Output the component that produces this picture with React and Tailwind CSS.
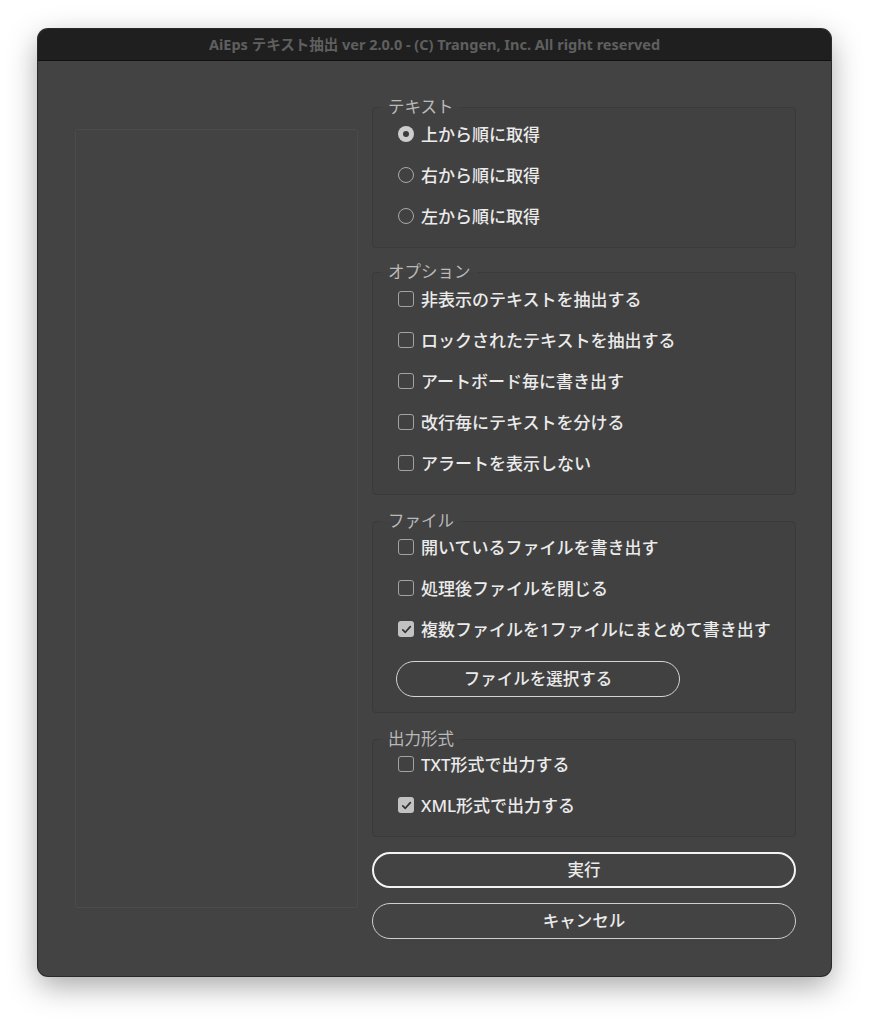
const font = { fontFamily: '"Noto Sans", "Noto Sans CJK JP", sans-serif' };

function Radio({ checked, label }) {
  return (
    <div className="flex h-[24px] items-center">
      {checked ? (
        <span className="flex h-[16px] w-[16px] items-center justify-center rounded-full bg-[#cdcdcd]">
          <span className="h-[6px] w-[6px] rounded-full bg-[#3c3c3c]" />
        </span>
      ) : (
        <span className="h-[16px] w-[16px] rounded-full border-[1.5px] border-[#a9a9a9]" />
      )}
      <span className="ml-[7px] text-[17px] font-medium leading-none text-[#ebebeb]">{label}</span>
    </div>
  );
}

function Check({ checked, label }) {
  return (
    <div className="flex h-[24px] items-center">
      {checked ? (
        <span className="flex h-[16px] w-[16px] items-center justify-center rounded-[3px] bg-[#c2c2c2]">
          <svg width="11" height="11" viewBox="0 0 11 11" fill="none">
            <path d="M1.8 5.8 L4.3 8.3 L9.3 2.6" stroke="#333" strokeWidth="1.7" strokeLinecap="round" strokeLinejoin="round" />
          </svg>
        </span>
      ) : (
        <span className="h-[16px] w-[16px] rounded-[3px] border-[1.5px] border-[#a3a3a3]" />
      )}
      <span className="ml-[7px] text-[17px] font-medium leading-none text-[#ebebeb]">{label}</span>
    </div>
  );
}

function Group({ title, pt, pb, children }) {
  return (
    <fieldset className="rounded-[4px] border border-[#3a3a3a] bg-[#414141]">
      <legend className="ml-[8px] px-[7px] text-[16.5px] leading-[18px] text-[#b9b9b9]">{title}</legend>
      <div className={`flex flex-col gap-[17px] pl-[25px] ${pt} ${pb}`}>{children}</div>
    </fieldset>
  );
}

export default function App() {
  return (
    <div className="h-[1024px] w-[870px] bg-white pl-[38px] pt-[29px]" style={font}>
      <div className="flex h-[947px] w-[793px] flex-col overflow-hidden rounded-[10px] bg-[#434343] shadow-[0_10px_30px_rgba(0,0,0,0.35)] ring-1 ring-[#2a2a2a]">
        <div className="flex h-[32px] shrink-0 items-center justify-center border-b border-[#111] bg-[#1f1f1f]">
          <span className="text-[14.5px] font-bold text-[#5f5f5f]">
            AiEps テキスト抽出 ver 2.0.0 - (C) Trangen, Inc. All right reserved
          </span>
        </div>
        <div className="flex flex-1 items-center pl-[37px] pr-[35px]">
          <div className="h-[779px] w-[283px] rounded-[2px] border border-[#4b4b4b]" />
          <div className="ml-[14px] flex w-[424px] flex-col">
            <Group title="テキスト" pt="pt-[6px]" pb="pb-[19px]">
              <Radio checked label="上から順に取得" />
              <Radio label="右から順に取得" />
              <Radio label="左から順に取得" />
            </Group>
            <div className="mt-[15px]">
              <Group title="オプション" pt="pt-[6px]" pb="pb-[19px]">
                <Check label="非表示のテキストを抽出する" />
                <Check label="ロックされたテキストを抽出する" />
                <Check label="アートボード毎に書き出す" />
                <Check label="改行毎にテキストを分ける" />
                <Check label="アラートを表示しない" />
              </Group>
            </div>
            <div className="mt-[17px]">
              <Group title="ファイル" pt="pt-[5px]" pb="pb-[15px]">
                <Check label="開いているファイルを書き出す" />
                <Check label="処理後ファイルを閉じる" />
                <Check checked label="複数ファイルを1ファイルにまとめて書き出す" />
                <button className="-ml-[2px] mt-[3px] flex h-[36px] w-[284px] items-center justify-center rounded-full border-[1.5px] border-[#d4d4d4] text-[16.5px] font-medium text-[#ebebeb]">
                  ファイルを選択する
                </button>
              </Group>
            </div>
            <div className="mt-[17px]">
              <Group title="出力形式" pt="pt-[4px]" pb="pb-[19px]">
                <Check label="TXT形式で出力する" />
                <Check checked label="XML形式で出力する" />
              </Group>
            </div>
            <button className="mt-[15px] flex h-[36px] w-full items-center justify-center rounded-full border-2 border-[#f4f4f4] text-[16.5px] font-medium text-[#ebebeb]">
              実行
            </button>
            <button className="mt-[15px] flex h-[36px] w-full items-center justify-center rounded-full border-[1.5px] border-[#cfcfcf] text-[16.5px] font-medium text-[#ebebeb]">
              キャンセル
            </button>
          </div>
        </div>
      </div>
    </div>
  );
}
